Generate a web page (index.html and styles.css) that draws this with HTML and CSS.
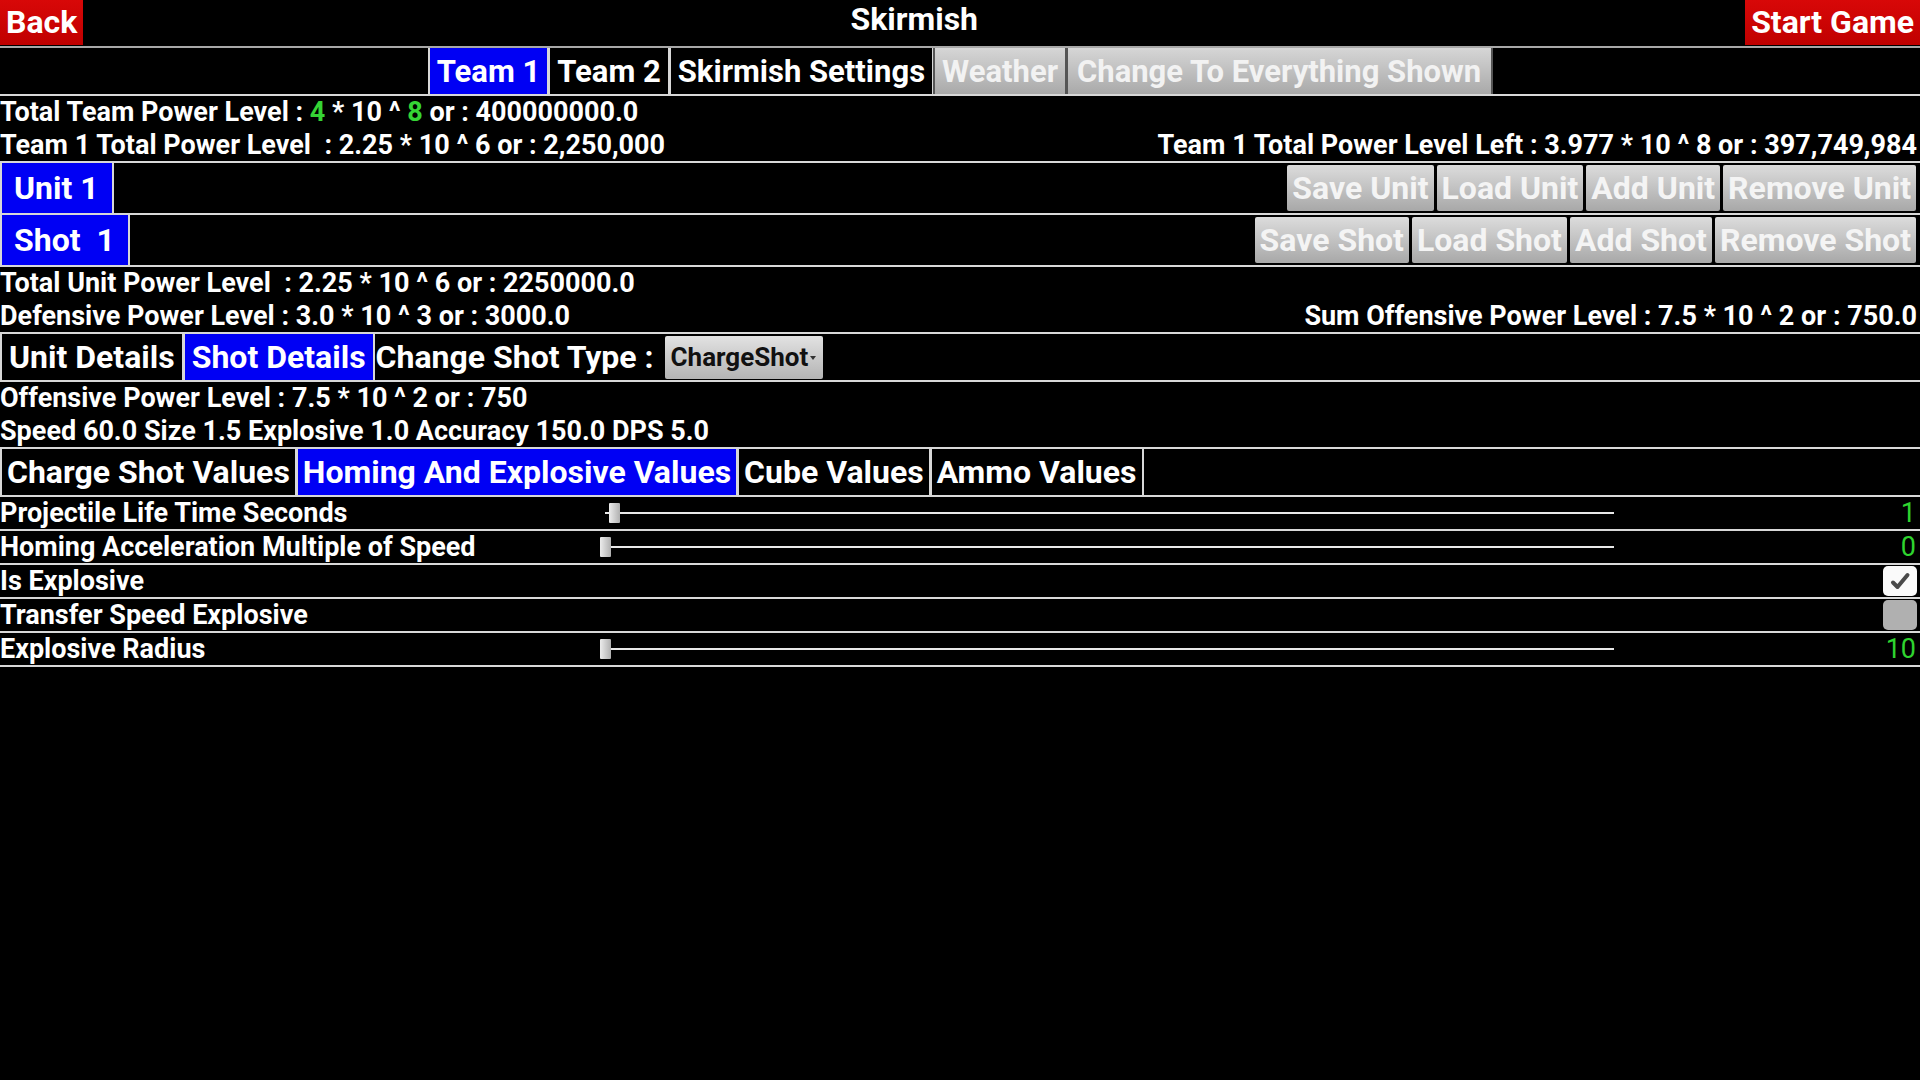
FILE: index.html
```html
<!DOCTYPE html>
<html lang="en">
<head>
<meta charset="utf-8">
<title>Skirmish</title>
<link rel="stylesheet" href="styles.css">
</head>
<body>
<div class="app">
  <header class="topbar">
    <button class="btn-red">Back</button>
    <h1 class="title">Skirmish</h1>
    <button class="btn-red">Start Game</button>
  </header>

  <nav class="tabrow centered">
    <div class="tab active">Team 1</div>
    <div class="tab">Team 2</div>
    <div class="tab">Skirmish Settings</div>
    <div class="tab disabled">Weather</div>
    <div class="tab disabled wide">Change To Everything Shown</div>
  </nav>

  <section class="info">
    <div class="line">Total Team Power Level : <span class="green">4</span> * 10 ^ <span class="green">8</span> or : 400000000.0</div>
    <div class="line split">
      <span>Team 1 Total Power Level&nbsp; : 2.25 * 10 ^ 6 or : 2,250,000</span>
      <span>Team 1 Total Power Level Left : 3.977 * 10 ^ 8 or : 397,749,984</span>
    </div>
  </section>

  <div class="selrow">
    <div class="tab active big">Unit 1</div>
    <div class="fill"></div>
    <div class="actions">
      <button class="btn-gray">Save Unit</button>
      <button class="btn-gray">Load Unit</button>
      <button class="btn-gray">Add Unit</button>
      <button class="btn-gray">Remove Unit</button>
    </div>
  </div>

  <div class="selrow">
    <div class="tab active big">Shot&nbsp; 1</div>
    <div class="fill"></div>
    <div class="actions">
      <button class="btn-gray">Save Shot</button>
      <button class="btn-gray">Load Shot</button>
      <button class="btn-gray">Add Shot</button>
      <button class="btn-gray">Remove Shot</button>
    </div>
  </div>

  <section class="info">
    <div class="line">Total Unit Power Level&nbsp; : 2.25 * 10 ^ 6 or : 2250000.0</div>
    <div class="line split">
      <span>Defensive Power Level : 3.0 * 10 ^ 3 or : 3000.0</span>
      <span>Sum Offensive Power Level : 7.5 * 10 ^ 2 or : 750.0</span>
    </div>
  </section>

  <nav class="tabrow">
    <div class="tab">Unit Details</div>
    <div class="tab active">Shot Details</div>
    <span class="label">Change Shot Type :</span>
    <div class="dropdown">ChargeShot<span class="caret"></span></div>
  </nav>

  <section class="info">
    <div class="line">Offensive Power Level : 7.5 * 10 ^ 2 or : 750</div>
    <div class="line">Speed 60.0 Size 1.5 Explosive 1.0 Accuracy 150.0 DPS 5.0</div>
  </section>

  <nav class="tabrow compact">
    <div class="tab">Charge Shot Values</div>
    <div class="tab active">Homing And Explosive Values</div>
    <div class="tab">Cube Values</div>
    <div class="tab">Ammo Values</div>
  </nav>

  <section class="settings">
    <div class="setting">
      <span class="name">Projectile Life Time Seconds</span>
      <div class="slider"><div class="track"></div><div class="thumb" style="left: 4px"></div></div>
      <span class="value">1</span>
    </div>
    <div class="setting">
      <span class="name">Homing Acceleration Multiple of Speed</span>
      <div class="slider"><div class="track"></div><div class="thumb" style="left: -5px"></div></div>
      <span class="value">0</span>
    </div>
    <div class="setting">
      <span class="name">Is Explosive</span>
      <span class="check on"><svg viewBox="0 0 24 24" width="24" height="24"><path d="M5 13.5l4.5 4.5L19.5 6" fill="none" stroke="#4a4a4a" stroke-width="4" stroke-linecap="round" stroke-linejoin="round"/></svg></span>
    </div>
    <div class="setting">
      <span class="name">Transfer Speed Explosive</span>
      <span class="check"></span>
    </div>
    <div class="setting">
      <span class="name">Explosive Radius</span>
      <div class="slider"><div class="track"></div><div class="thumb" style="left: -5px"></div></div>
      <span class="value">10</span>
    </div>
  </section>
</div>
</body>
</html>
```

FILE: styles.css
```css
* { box-sizing: border-box; }

html, body {
  margin: 0;
  padding: 0;
  background: #000;
}

body {
  width: 1920px;
  height: 1080px;
  overflow: hidden;
  color: #fff;
  font-family: Roboto, "Noto Sans", sans-serif;
}

button {
  font-family: inherit;
  border: none;
  margin: 0;
  padding: 0;
  cursor: pointer;
}

.app {
  display: flex;
  flex-direction: column;
}

/* ---- title bar ---- */
.topbar {
  display: flex;
  align-items: flex-start;
  height: 48px;
  border-bottom: 2px solid #a8a8a8;
}

.btn-red {
  height: 45px;
  padding: 0 6px;
  background: linear-gradient(#d80808, #c00000);
  color: #fff;
  font-size: 32px;
  font-weight: 700;
  line-height: 45px;
}

.title {
  flex: 1;
  margin: 0;
  text-align: center;
  font-size: 32px;
  font-weight: 700;
  line-height: 38px;
}

/* ---- tab strips ---- */
.tabrow {
  display: flex;
  align-items: stretch;
  height: 48px;
  border-bottom: 2px solid #d8d8d8;
}

.tabrow.centered { justify-content: center; }

.tab {
  display: flex;
  align-items: center;
  padding: 0 7px;
  border-left: 2px solid #d8d8d8;
  border-right: 2px solid #d8d8d8;
  margin-right: -1px;
  background: #000;
  color: #fff;
  font-size: 32px;
  font-weight: 700;
  white-space: nowrap;
}

.tabrow.centered .tab { font-size: 31px; }
.tabrow.centered .tab.wide { padding: 0 10px 0 9px; }
.tabrow.compact .tab { padding: 0 5px; }

.tab.active { background: #0000f4; }

.tab.disabled {
  background: linear-gradient(#d6d6d6, #a9a9a9);
  color: #f2f2f2;
  border-color: #555;
}

.tabrow .label {
  display: flex;
  align-items: center;
  padding: 0 8px 0 2px;
  font-size: 32px;
  font-weight: 700;
  white-space: nowrap;
}

.dropdown {
  align-self: center;
  display: flex;
  align-items: center;
  height: 43px;
  margin-left: 3px;
  padding: 0 7px 0 6px;
  border-radius: 2px;
  background: linear-gradient(#e2e2e2, #b4b4b4);
  color: #111;
  font-size: 26px;
  font-weight: 700;
}

.caret {
  width: 0;
  height: 0;
  margin-left: 2px;
  margin-top: 2px;
  border-left: 3px solid transparent;
  border-right: 3px solid transparent;
  border-top: 4px solid #333;
}

/* ---- text blocks ---- */
.info {
  display: flex;
  flex-direction: column;
  border-bottom: 2px solid #d8d8d8;
}

.line {
  height: 32.5px;
  line-height: 32px;
  font-size: 27px;
  font-weight: 700;
  white-space: pre;
}

.line.split {
  display: flex;
  justify-content: space-between;
  padding-right: 3px;
}

.green { color: #35d435; }

/* ---- unit / shot selector rows ---- */
.selrow {
  display: flex;
  align-items: stretch;
  height: 52px;
  border-bottom: 2px solid #d8d8d8;
}

.selrow .tab.big { padding: 0 13px 0 12px; }

.fill { flex: 1; }

.actions {
  display: flex;
  align-items: center;
  gap: 3px;
  padding-right: 4px;
}

.btn-gray {
  height: 46px;
  padding: 0 5px;
  border-radius: 2px;
  background: linear-gradient(#dcdcdc, #a8a8a8);
  color: #f4f4f4;
  font-size: 32px;
  font-weight: 700;
  white-space: nowrap;
}

/* ---- settings list ---- */
.setting {
  display: flex;
  align-items: center;
  height: 34px;
  border-bottom: 2px solid #d8d8d8;
}

.setting .name {
  width: 605px;
  font-size: 27px;
  font-weight: 700;
  white-space: nowrap;
}

.slider {
  position: relative;
  width: 1009px;
  height: 26px;
}

.track {
  position: absolute;
  left: 0;
  right: 0;
  top: 12px;
  height: 2px;
  background: #e8e8e8;
}

.thumb {
  position: absolute;
  top: 3px;
  width: 11px;
  height: 20px;
  border-radius: 1px;
  background: linear-gradient(90deg, #ececec, #b0b0b0);
}

.value {
  margin-left: auto;
  padding-right: 4px;
  color: #2fd42f;
  font-size: 27px;
  font-weight: 400;
}

.check {
  margin-left: auto;
  margin-right: 3px;
  width: 34px;
  height: 30px;
  border-radius: 5px;
  background: #b0b0b0;
  display: flex;
  align-items: center;
  justify-content: center;
}

.check.on { background: #fafafa; }
```
